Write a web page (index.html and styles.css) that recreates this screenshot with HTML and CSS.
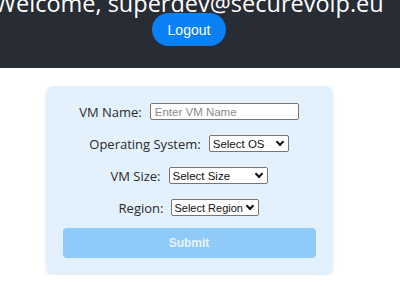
FILE: index.html
```html
<!DOCTYPE html>
<html lang="en">
<head>
    <meta charset="UTF-8">
    <meta name="viewport" content="width=device-width, initial-scale=1.0">
    <title>VM Dashboard</title>
    <link rel="stylesheet" href="styles.css">
</head>
<body>
    <header class="app-header">
        <div class="header-inner">
            <h2 class="welcome">Welcome, superdev@securevoip.eu</h2>
            <button class="logout-button">Logout</button>
        </div>
    </header>
    <main class="content">
        <form class="vm-form">
            <div class="form-row">
                <label for="vmName">VM Name:</label>
                <input type="text" id="vmName" class="vm-name" placeholder="Enter VM Name">
            </div>
            <div class="form-row">
                <label for="vmOs">Operating System:</label>
                <span class="select-wrap">
                    <select id="vmOs" class="select-os">
                        <option>Select OS</option>
                    </select>
                </span>
            </div>
            <div class="form-row">
                <label for="vmSize">VM Size:</label>
                <span class="select-wrap">
                    <select id="vmSize" class="select-size">
                        <option>Select Size</option>
                    </select>
                </span>
            </div>
            <div class="form-row">
                <label for="vmRegion">Region:</label>
                <span class="select-wrap">
                    <select id="vmRegion" class="select-region">
                        <option>Select Region</option>
                    </select>
                </span>
            </div>
            <button type="submit" class="submit-button" disabled>Submit</button>
        </form>
    </main>
</body>
</html>
```

FILE: styles.css
```css
body {
    margin: 0;
    font-family: "Open Sans", "Noto Sans", sans-serif;
    background: white;
    color: #222;
}
.app-header {
    background-color: #282c34;
    height: 68px;
    overflow: hidden;
}
.header-inner {
    width: 378px;
    display: flex;
    flex-direction: column;
    align-items: center;
}
.welcome {
    margin: -13px -40px 0;
    font-size: 23.5px;
    font-weight: normal;
    line-height: 32px;
    color: white;
    white-space: nowrap;
}
.logout-button {
    margin-top: -6px;
    width: 74px;
    height: 33px;
    padding: 0;
    border: none;
    border-radius: 17px;
    background-color: #0a80f5;
    color: white;
    font-family: "Liberation Sans", Arial, sans-serif;
    font-size: 14px;
    cursor: pointer;
}
.content {
    width: 378px;
    padding-top: 18px;
}
/* Create VM form */
.vm-form {
    width: 287px;
    margin: 0 auto;
    box-sizing: border-box;
    padding: 17px;
    background: #e3f1fd;
    border-radius: 8px;
    box-shadow: 0 2px 4px rgba(0, 0, 0, 0.08);
}
.form-row {
    display: flex;
    justify-content: center;
    align-items: center;
    gap: 8px;
    height: 17px;
    margin-bottom: 15px;
}
.form-row label {
    font-size: 13px;
    color: #2a2a2a;
}
.form-row input,
.form-row select {
    box-sizing: border-box;
    height: 17px;
    font-family: "Liberation Sans", Arial, sans-serif;
    font-size: 11.5px;
    border: 1px solid #767676;
    border-radius: 2px;
    background: white;
    color: #111;
}
.form-row input {
    padding: 0 4px;
}
.form-row input::placeholder {
    color: #8a8a8a;
}
.select-wrap {
    position: relative;
    display: inline-flex;
}
.form-row select {
    appearance: none;
    padding: 0 0 0 3px;
}
/* dropdown chevron */
.select-wrap::after {
    content: "";
    position: absolute;
    right: 6px;
    top: 4px;
    width: 4px;
    height: 4px;
    border-right: 2px solid #111;
    border-bottom: 2px solid #111;
    transform: rotate(45deg);
    pointer-events: none;
}
.vm-name {
    width: 149px;
}
.select-os {
    width: 80px;
}
.select-size {
    width: 99px;
}
.form-row .select-region {
    width: 88px;
    padding-left: 2px;
    font-size: 11px;
}
.submit-button {
    display: block;
    width: 100%;
    height: 30px;
    margin-top: -3px;
    border: none;
    border-radius: 4px;
    background-color: #90caf8;
    color: #e8f3fd;
    font-family: "Liberation Sans", Arial, sans-serif;
    font-size: 12px;
    font-weight: bold;
}
```
